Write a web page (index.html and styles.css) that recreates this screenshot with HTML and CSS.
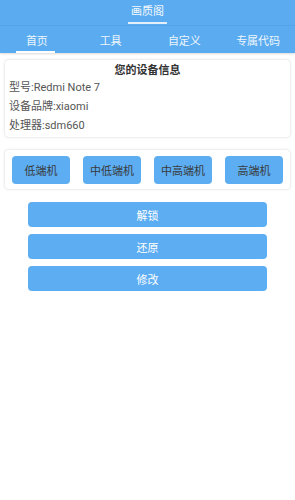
FILE: index.html
```html
<!DOCTYPE html>
<html>
<head>
    <meta charset="utf-8">
    <title>画质阁</title>
    <link rel="stylesheet" href="styles.css">
</head>
<body>
    <div class="app-bar">
        <div class="app-title"><span>画质阁</span></div>
        <div class="tabs">
            <div class="tab active"><span>首页</span></div>
            <div class="tab"><span>工具</span></div>
            <div class="tab"><span>自定义</span></div>
            <div class="tab"><span>专属代码</span></div>
        </div>
    </div>

    <div class="card info-card">
        <h2>您的设备信息</h2>
        <p>型号:Redmi Note 7</p>
        <p>设备品牌:xiaomi</p>
        <p>处理器:sdm660</p>
    </div>

    <div class="card level-card">
        <button class="level-button">低端机</button>
        <button class="level-button">中低端机</button>
        <button class="level-button">中高端机</button>
        <button class="level-button">高端机</button>
    </div>

    <div class="actions">
        <button class="action-button">解锁</button>
        <button class="action-button">还原</button>
        <button class="action-button">修改</button>
    </div>
</body>
</html>
```

FILE: styles.css
```css
/* Reset */
* {
    margin: 0;
    padding: 0;
    box-sizing: border-box;
    font-family: Roboto, "Noto Sans CJK SC", sans-serif;
}

html, body {
    width: 100%;
    height: 100%;
    background-color: #ffffff;
    color: #555555;
}

/* Top bar with title and tabs */
.app-bar {
    background-color: #5aabef;
    box-shadow: 0 1px 2px rgba(0,0,0,0.15);
}

.app-title {
    height: 26px;
    display: flex;
    justify-content: center;
    border-bottom: 1px solid #54a3e6;
}

.app-title span {
    font-size: 11px;
    line-height: 18px;
    padding-top: 3px;
    color: #f4f9fe;
    height: 24px;
    width: 39px;
    text-align: center;
    border-bottom: 2px solid #e3f0fc;
}

.tabs {
    display: flex;
    height: 27px;
}

.tab {
    flex: 1;
    display: flex;
    flex-direction: column;
    align-items: center;
    justify-content: center;
    position: relative;
    font-size: 11px;
    color: #eef6fd;
}

.tab.active::after {
    content: "";
    position: absolute;
    bottom: 0;
    left: 16px;
    width: 39px;
    height: 2px;
    background: #ffffff;
}

/* Cards */
.card {
    margin: 0 5px;
    background: #ffffff;
    border-radius: 4px;
    box-shadow: 0 0 3px rgba(0,0,0,0.18);
}

.info-card {
    margin-top: 7px;
    padding: 4px 4px 4px;
    height: 77px;
}

.info-card h2 {
    font-size: 11px;
    font-weight: bold;
    color: #333333;
    text-align: center;
    line-height: 14px;
}

.info-card p {
    font-size: 11px;
    line-height: 19px;
    color: #555555;
}

.level-card {
    margin-top: 13px;
    height: 39px;
    padding: 0 7px;
    display: flex;
    justify-content: space-between;
    align-items: center;
}

.level-button {
    width: 58px;
    height: 28px;
    border: none;
    border-radius: 4px;
    background: #5cadf2;
    color: #3a3a3a;
    font-size: 11px;
}

/* Action buttons */
.actions {
    margin-top: 13px;
    display: flex;
    flex-direction: column;
    align-items: center;
    gap: 7px;
}

.action-button {
    width: 239px;
    height: 25px;
    border: none;
    border-radius: 4px;
    background: #5cadf2;
    color: #ffffff;
    font-size: 11px;
}
```
